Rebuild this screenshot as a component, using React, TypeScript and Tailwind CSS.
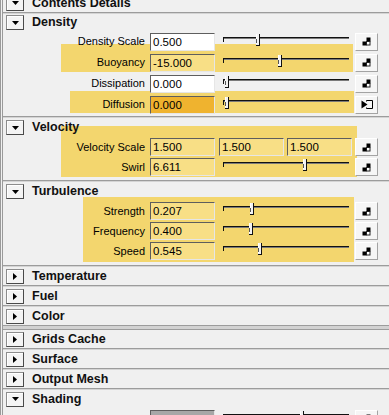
import React from "react";

const HL = "#f3d66e";

function Tri({ open }: { open: boolean }) {
  return open ? (
    <svg width="7" height="4" viewBox="0 0 7 4"><polygon points="0,0 7,0 3.5,4" fill="#000" /></svg>
  ) : (
    <svg width="4" height="7" viewBox="0 0 4 7"><polygon points="0,0 4,3.5 0,7" fill="#000" /></svg>
  );
}

function Header({ title, open, h }: { title: string; open: boolean; h: string }) {
  return (
    <div className={`flex items-center ${h}`}>
      <div className="ml-[3px] flex h-[15px] w-[18px] items-center justify-center border border-[#8c8c8c] border-b-[#4a4a4a] border-r-[#4a4a4a] bg-[#f4f4f4] shadow-[inset_1px_1px_0_#ffffff]">
        <Tri open={open} />
      </div>
      <span className="ml-[8px] text-[12.5px] font-bold leading-none text-[#111]">{title}</span>
    </div>
  );
}

function Sep() {
  return <div className="h-[2px] border-t border-b border-t-[#9c9c9c] border-b-[#d4d4d4]" />;
}

function MapIcon() {
  return (
    <svg width="9" height="9" viewBox="0 0 9 9">
      <rect x="4.5" y="0.5" width="4" height="4" fill="#000" />
      <rect x="0.5" y="4.5" width="4" height="4" fill="#000" />
      <rect x="4.5" y="4.5" width="3.5" height="3.5" fill="#fff" stroke="#222" strokeWidth="1" />
    </svg>
  );
}

function InIcon() {
  return (
    <svg width="12" height="11" viewBox="0 0 12 11">
      <path d="M5.5 2.5 V1.5 H11.5 V9.5 H5.5 V8.5" fill="none" stroke="#000" strokeWidth="1" />
      <polygon points="0.5,1.5 6.5,5.5 0.5,9.5" fill="#000" />
    </svg>
  );
}

function IconBtn({ kind = "map" }: { kind?: "map" | "in" }) {
  return (
    <div className="flex h-[18px] w-[23px] shrink-0 items-center justify-center border border-t-[#ffffff] border-l-[#ffffff] border-r-[#a3a3a3] border-b-[#a3a3a3] bg-[#f6f6f6]">
      {kind === "map" ? <MapIcon /> : <InIcon />}
    </div>
  );
}

function Field({ value, bg = "bg-white", w = "w-[65px]" }: { value: string; bg?: string; w?: string }) {
  return (
    <div
      className={`h-[18px] ${w} shrink-0 border border-t-[#5e5e5e] border-l-[#5e5e5e] border-r-[#e6e6e6] border-b-[#e6e6e6] pl-[2px] text-[11.5px] leading-[17px] text-black ${bg}`}
    >
      {value}
    </div>
  );
}

function Slider({ thumb }: { thumb: number }) {
  const t = thumb - 222;
  return (
    <svg width="128" height="18" viewBox="0 0 128 18" className="shrink-0">
      <line x1="1" y1="4.5" x2="127" y2="4.5" stroke="#111" strokeWidth="1" />
      <line x1="2" y1="5.5" x2="127" y2="5.5" stroke="#7a7a7a" strokeWidth="1" />
      <line x1="1.5" y1="4" x2="1.5" y2="9" stroke="#111" strokeWidth="1" />
      <rect x={t} y="1" width="4" height="12" fill="#f2f2f2" />
      <line x1={t + 0.5} y1="1" x2={t + 0.5} y2="11" stroke="#ffffff" strokeWidth="1" />
      <line x1={t + 0.5} y1="6" x2={t + 0.5} y2="10" stroke="#555" strokeWidth="1" />
      <line x1={t + 3.5} y1="1" x2={t + 3.5} y2="13" stroke="#111" strokeWidth="1" />
      <line x1={t} y1="12.5" x2={t + 4} y2="12.5" stroke="#111" strokeWidth="1" />
    </svg>
  );
}

function Row({ label, h, children }: { label: string; h: string; children: React.ReactNode }) {
  return (
    <div className={`flex items-center ${h}`}>
      <div className="w-[143px] shrink-0 pr-[1px] text-right text-[11px] leading-none text-black">{label}</div>
      <div className="ml-[4px] flex items-center">{children}</div>
    </div>
  );
}

function SliderRow({
  label,
  value,
  thumb,
  h,
  fieldBg,
  icon = "map",
}: {
  label: string;
  value: string;
  thumb: number;
  h: string;
  fieldBg?: string;
  icon?: "map" | "in";
}) {
  return (
    <Row label={label} h={h}>
      <Field value={value} bg={fieldBg} />
      <div className="ml-[7px]">
        <Slider thumb={thumb} />
      </div>
      <div className="ml-[5px]">
        <IconBtn kind={icon} />
      </div>
    </Row>
  );
}

export default function App() {
  const yl = "bg-[#f8df86]";
  return (
    <div className="relative h-[415px] w-[389px] overflow-hidden border-l border-[#9a9a9a] bg-[#f0f0f0] font-['Liberation_Sans',Arial,sans-serif]">
      {/* annotation highlights */}
      <div className="absolute left-[60px] top-[44px] h-[28px] w-[292px]" style={{ background: HL }} />
      <div className="absolute left-[69px] top-[91px] h-[22px] w-[284px]" style={{ background: HL }} />
      <div className="absolute left-[60px] top-[126px] h-[51px] w-[296px]" style={{ background: HL }} />
      <div className="absolute left-[82px] top-[197px] h-[65px] w-[271px]" style={{ background: HL }} />

      <div className="relative -mt-[6px] ml-[1px] border-l border-[#9a9a9a]">
        {/* Contents Details */}
        <Header title="Contents Details" open h="h-[18px]" />
        <Sep />

        {/* Density */}
        <Header title="Density" open h="h-[17px]" />
        <div className="pb-[1px]">
          <SliderRow label="Density Scale" value="0.500" thumb={256} h="h-[21px]" />
          <SliderRow label="Buoyancy" value="-15.000" thumb={278} h="h-[21px]" fieldBg={yl} />
          <SliderRow label="Dissipation" value="0.000" thumb={225} h="h-[21px]" />
          <SliderRow label="Diffusion" value="0.000" thumb={225} h="h-[21px]" fieldBg="bg-[#efb32f]" icon="in" />
        </div>
        <Sep />

        {/* Velocity */}
        <Header title="Velocity" open h="h-[19px]" />
        <div className="pb-[3px]">
          <Row label="Velocity Scale" h="h-[20px]">
            <Field value="1.500" bg={yl} />
            <div className="ml-[4px]">
              <Field value="1.500" bg={yl} />
            </div>
            <div className="ml-[3px]">
              <Field value="1.500" bg={yl} />
            </div>
            <div className="ml-[3px]">
              <IconBtn />
            </div>
          </Row>
          <SliderRow label="Swirl" value="6.611" thumb={303} h="h-[20px]" fieldBg={yl} />
        </div>
        <Sep />

        {/* Turbulence */}
        <Header title="Turbulence" open h="h-[19px]" />
        <div className="pb-[4px]">
          <SliderRow label="Strength" value="0.207" thumb={250} h="h-[20px]" fieldBg={yl} />
          <SliderRow label="Frequency" value="0.400" thumb={249} h="h-[20px]" fieldBg={yl} />
          <SliderRow label="Speed" value="0.545" thumb={258} h="h-[20px]" fieldBg={yl} />
        </div>
        <Sep />

        <Header title="Temperature" open={false} h="h-[18px]" />
        <Sep />
        <Header title="Fuel" open={false} h="h-[18px]" />
        <Sep />
        <Header title="Color" open={false} h="h-[18px]" />
        <div className="h-[5px] border-t border-b border-t-[#9c9c9c] border-b-[#9c9c9c] bg-[#d2d2d2]" />

        <Header title="Grids Cache" open={false} h="h-[18px]" />
        <Sep />
        <Header title="Surface" open={false} h="h-[18px]" />
        <Sep />
        <Header title="Output Mesh" open={false} h="h-[18px]" />
        <Sep />
        <Header title="Shading" open h="h-[18px]" />
        <Row label="" h="h-[21px]">
          <Field value="" bg="bg-[#a7a7a7]" />
          <div className="ml-[7px]">
            <Slider thumb={300} />
          </div>
          <div className="ml-[5px]">
            <IconBtn />
          </div>
        </Row>
      </div>
    </div>
  );
}
